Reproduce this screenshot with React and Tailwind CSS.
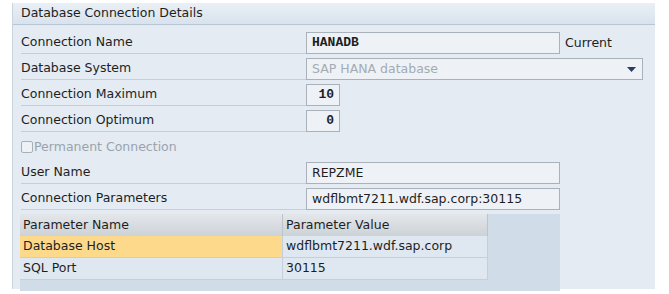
import React from 'react';

const sans = { fontFamily: '"DejaVu Sans", Tahoma, sans-serif' };

const Label = ({ children, muted }) => (
  <div className="w-[285px] h-[22px] flex items-center border-b border-[#c6cfd9]">
    <span className={muted ? 'text-[#9aa3ad]' : 'text-[#1e1e1e]'}>{children}</span>
  </div>
);

const Row = ({ children }) => (
  <div className="h-[26px] flex items-start pl-[8px]">{children}</div>
);

const Field = ({ width, children, mono, right, muted }) => (
  <div
    className={`h-[22px] ${width} border border-[#a9b1ba] bg-[#eef2f6] flex items-center px-[5px] ${
      right ? 'justify-end' : ''
    } ${muted ? 'text-[#9ea6ae]' : 'text-[#1e1e1e]'}`}
    style={mono ? { fontFamily: '"Liberation Mono", "Courier New", monospace', fontWeight: 700, fontSize: 13 } : undefined}
  >
    {children}
  </div>
);

export default function App() {
  const params = [
    { name: 'Database Host', value: 'wdflbmt7211.wdf.sap.corp', active: true },
    { name: 'SQL Port', value: '30115' },
  ];

  return (
    <div className="w-[669px] h-[294px] bg-white pt-[3px] pl-[12px]" style={sans}>
      <div className="w-[643px] h-[286px] bg-[#e4ebf2] border-l border-[#c9d4df] text-[12.5px]">
        <div className="h-[22px] bg-gradient-to-b from-[#e9eff5] to-[#d9e3ed] border-b border-[#b7c6d5] flex items-center pl-[8px] text-[#1e1e1e]">
          Database Connection Details
        </div>

        <div className="pt-[7px]">
          <Row>
            <Label>Connection Name</Label>
            <Field width="w-[254px]" mono>HANADB</Field>
            <span className="ml-[5px] h-[22px] flex items-center text-[#1e1e1e]">Current</span>
          </Row>
          <Row>
            <Label>Database System</Label>
            <div className="h-[22px] w-[337px] border border-[#a9b1ba] bg-[#eef2f6] flex items-center justify-between pl-[5px] pr-[6px] text-[#a3abb3]">
              <span>SAP HANA database</span>
              <svg width="9" height="5" viewBox="0 0 9 5">
                <path d="M0 0 H9 L4.5 5 Z" fill="#2b3d5c" />
              </svg>
            </div>
          </Row>
          <Row>
            <Label>Connection Maximum</Label>
            <Field width="w-[34px]" mono right>10</Field>
          </Row>
          <Row>
            <Label>Connection Optimum</Label>
            <Field width="w-[34px]" mono right>0</Field>
          </Row>
          <Row>
            <div className="h-[22px] flex items-center gap-[1px] text-[#9aa3ad]">
              <span className="w-[12px] h-[12px] border border-[#a7b0ba] bg-[#eef2f6] rounded-[2px]" />
              <span>Permanent Connection</span>
            </div>
          </Row>
          <Row>
            <Label>User Name</Label>
            <Field width="w-[254px]">REPZME</Field>
          </Row>
          <Row>
            <Label>Connection Parameters</Label>
            <Field width="w-[254px]">wdflbmt7211.wdf.sap.corp:30115</Field>
          </Row>
        </div>

        <div className="ml-[7px] w-[540px] h-[77px] bg-[#d0dce8] flex flex-col">
          <div className="h-[22px] flex">
            <div className="w-[263px] bg-gradient-to-b from-[#e4e7ea] to-[#cdd2d7] border-r border-[#bcc3ca] flex items-center pl-[3px] text-[#1e1e1e]">
              Parameter Name
            </div>
            <div className="w-[205px] bg-gradient-to-b from-[#e4e7ea] to-[#cdd2d7] border-r border-[#bcc3ca] flex items-center pl-[3px] text-[#1e1e1e]">
              Parameter Value
            </div>
          </div>
          {params.map((p) => (
            <div key={p.name} className="h-[22px] flex">
              <div
                className={`w-[263px] border-r border-b border-[#c3cfdb] flex items-center pl-[3px] text-[#1e1e1e] ${
                  p.active ? 'bg-[#fdd98c]' : 'bg-[#dfe8f1]'
                }`}
              >
                {p.name}
              </div>
              <div className="w-[205px] bg-[#dfe8f1] border-r border-b border-[#c3cfdb] flex items-center pl-[3px] text-[#1e1e1e]">
                {p.value}
              </div>
            </div>
          ))}
        </div>
      </div>
    </div>
  );
}
